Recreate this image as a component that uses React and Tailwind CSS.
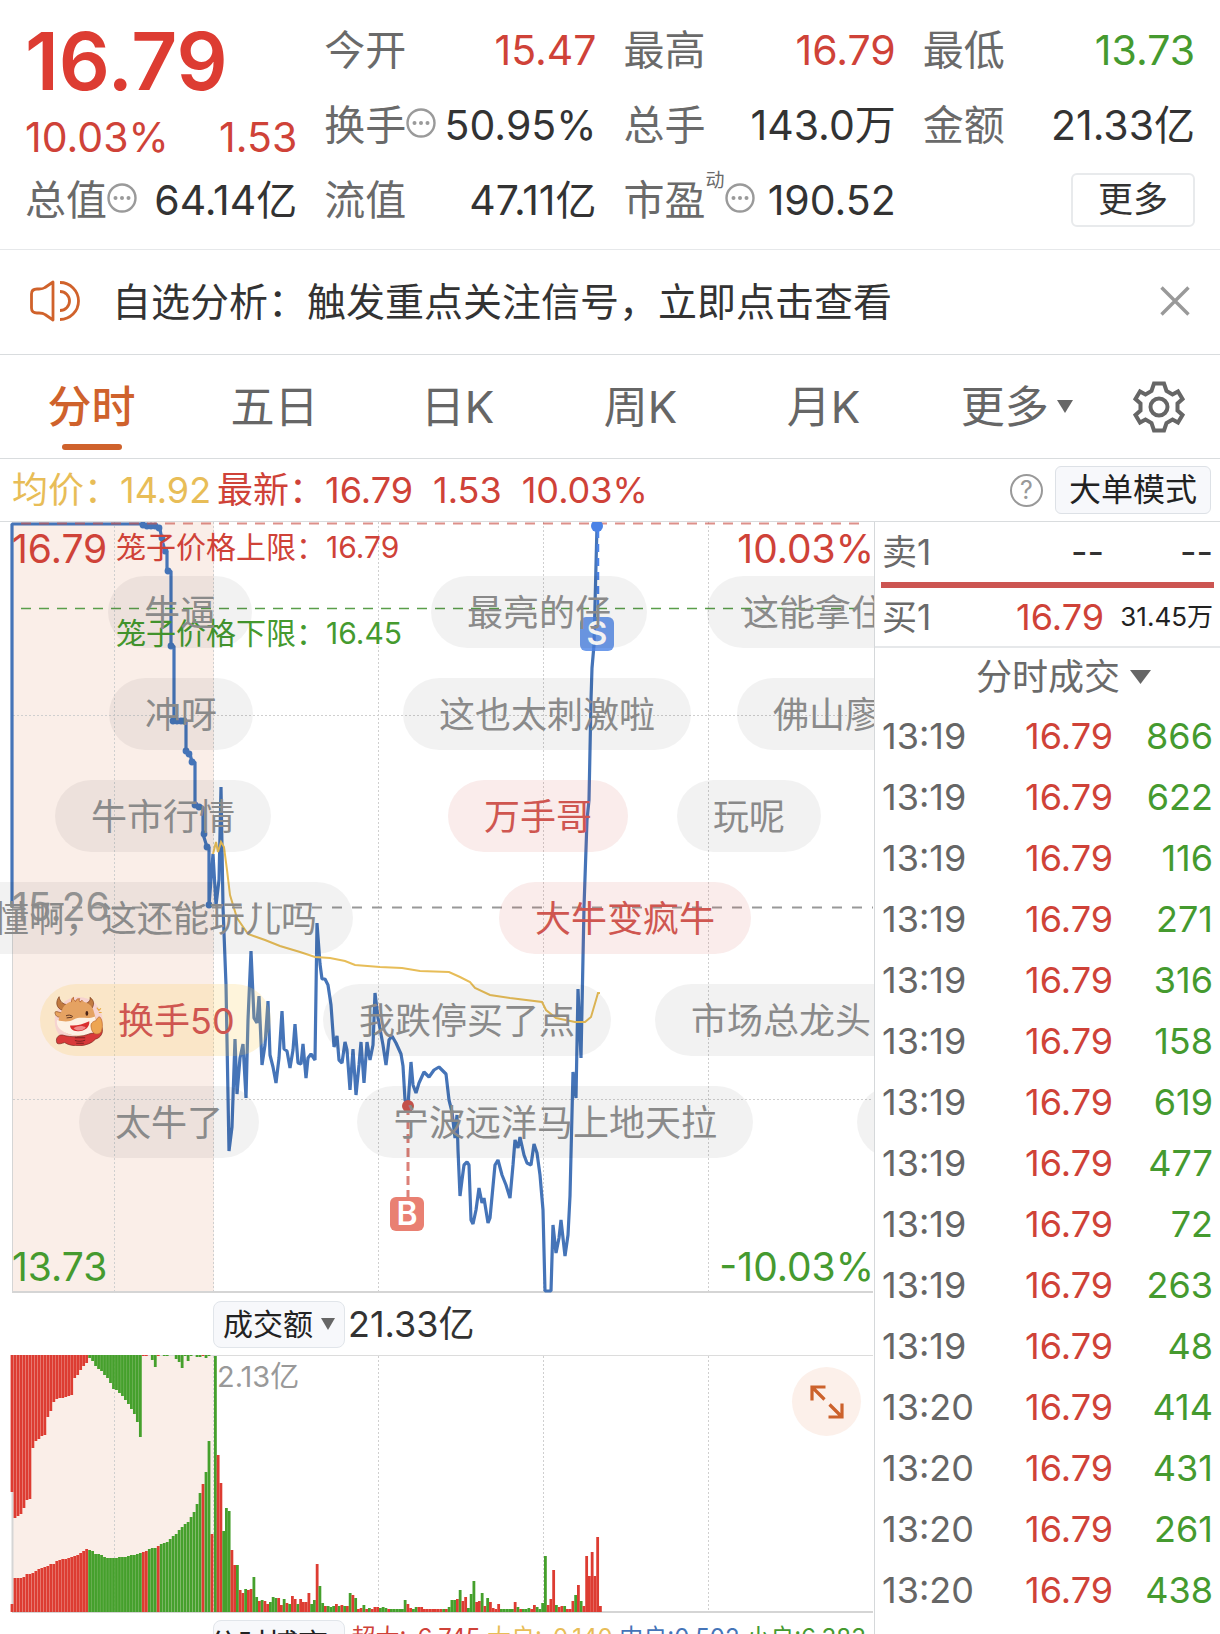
import React from "react";

const RED = "#dd3c32";
const GREEN = "#45a02c";

const priceLine =
  "12,907 12,524 143,524 150,526 157,526 160,529 162,540 165,551 167,551 167,571 171,571 171,646 174,646 174,721 186,721 186,751 190,754 192,762 195,762 195,806 203,807 203,834 207,847 209,847 209,905 213,854 216,905 219,880 221,787 223,907 226,985 229,1151 232,1127 235,1039 237,1094 240,1058 243,1044 246,1098 248,1020 251,951 254,1018 257,1023 259,996 262,1065 265,1045 268,1001 270,1055 273,1067 276,1083 279,1058 282,1011 284,1049 287,1051 290,1068 293,1050 295,1024 298,1063 301,1064 303,1044 306,1078 308,1058 311,1054 315,1060 317,923 320,964 322,979 325,979 328,985 331,1005 334,1047 337,1036 339,1060 342,1063 345,1042 347,1050 350,1090 353,1049 356,1095 359,1065 361,1042 364,1083 367,1042 370,1060 373,1045 375,993 378,1018 383,1045 386,1065 389,1040 392,1036 396,1043 401,1054 403,1066 405,1100 408,1105 411,1062 413,1085 416,1093 419,1083 424,1072 429,1077 434,1070 439,1067 446,1074 449,1100 452,1112 455,1138 457,1115 458,1150 460,1196 462,1180 464,1165 467,1162 469,1165 471,1220 473,1224 476,1210 479,1188 482,1203 484,1198 488,1223 490,1218 495,1165 498,1160 502,1175 506,1185 510,1198 513,1165 515,1140 518,1148 520,1137 524,1155 527,1163 531,1165 534,1144 537,1153 540,1175 543,1210 545,1291 551,1291 553,1225 556,1253 559,1238 561,1220 565,1256 568,1235 570,1196 573,1072 576,1098 578,989 581,1058 584,907 587,820 589,800 591,700 592,668 594,645 597,525";

const averageLine =
  "213,854 216,842 218,852 221,842 224,847 227,870 230,895 237,918 248,934 265,940 280,946 300,952 315,957 330,958 345,961 355,965 380,967 402,968 420,971 449,972 460,977 470,982 475,988 490,995 510,998 542,1002 546,1010 556,1018 575,1022 585,1022 591,1017 596,1000 598,993 600,993";

const auctionDots = [
  [143, 525], [147, 526], [151, 526], [155, 526], [159, 528], [162, 538], [165, 551], [168, 571],
  [171, 646], [173, 721], [177, 721], [181, 721], [184, 721], [186, 751], [189, 754], [192, 762],
  [195, 805], [199, 807], [204, 834], [207, 847], [209, 905],
];

// Call-auction bars: height from the base, height from the top, colours.
const auctionBase = [
  8, 34, 34, 34, 35, 38, 38, 39, 41, 43, 44, 45, 46, 48, 48, 51, 52, 53, 53, 54, 55, 56, 57, 59, 61, 63,
  62, 61, 58, 58, 57, 55, 54, 54, 54, 54, 55, 55, 55, 56, 57, 57, 58, 59, 60, 61, 63, 64, 64, 66, 68, 69,
  70, 73, 76, 78, 82, 85, 88, 90, 95, 100, 108, 119, 128, 140, 171, 78,
];
const auctionTop = [
  137, 163, 161, 159, 153, 145, 144, 93, 86, 84, 81, 80, 62, 56, 47, 44, 43, 43, 42, 41, 40, 23, 20, 15, 11, 8,
  3, 6, 11, 14, 16, 20, 23, 28, 34, 35, 38, 41, 45, 49, 54, 59, 67, 82, 1, 1, 0, 5, 12, 1, 0, 1,
  1, 0, 0, 4, 7, 13, 1, 6, 1, 0, 2, 2, 1, 3, 1, 0,
];
const auctionRed = (i) => i < 26 || [44, 45, 49, 64, 67].includes(i);

// Continuous trading, one entry a minute: colour letter and height.
const minutes =
  "g256 r157 r129 g81 g104 g101 r62 r47 g47 r22 r19 g23 r22 r23 g35 g15 r11 g12 r11 r8 g10 g15 g14 r14 r7 g13 r9 g8 r16 r13 g8 r13 r10 r10 r19 g8 g12 r48 g26 g9 r6 g6 g5 g6 r8 g6 r7 g6 r6 g19 r17 g14 r3 r4 g7 r3 g4 r3 r5 r5 g4 g5 g4 r3 g3 g3 g3 g3 g3 g12 r8 r4 g3 g5 r5 r5 r3 r3 r3 r3 r3 r3 r3 g3 r3 g5 g12 g12 r13 g22 r11 r15 g4 g18 g31 r10 r11 g19 r6 g14 r10 r4 r3 r8 g3 g3 g3 g3 g3 r10 g5 r3 g3 g3 g4 r3 r7 g5 g3 g9 g56 r7 r13 r42 g7 r5 r6 g6 r3 r3 r11 g17 r27 g11 r6 r56 r36 r60 r36 r75 r6".split(" ");

const trades = [
  ["13:19", 866], ["13:19", 622], ["13:19", 116], ["13:19", 271], ["13:19", 316],
  ["13:19", 158], ["13:19", 619], ["13:19", 477], ["13:19", 72], ["13:19", 263],
  ["13:19", 48], ["13:20", 414], ["13:20", 431], ["13:20", 261], ["13:20", 438],
];

const comments = [
  ["牛逼", "left-[108px] top-[54px]"],
  ["最亮的仔", "left-[431px] top-[54px]"],
  ["这能拿住", "left-[707px] top-[54px]"],
  ["冲呀", "left-[109px] top-[156px]"],
  ["这也太刺激啦", "left-[403px] top-[156px]"],
  ["佛山廖", "left-[737px] top-[156px]"],
  ["牛市行情", "left-[55px] top-[258px]"],
  ["万手哥", "left-[448px] top-[258px]", "hot"],
  ["玩呢", "left-[677px] top-[258px]"],
  ["懂啊，这还能玩儿吗", "left-[-43px] top-[360px]"],
  ["大牛变疯牛", "left-[499px] top-[360px]", "hot"],
  ["换手50", "left-[40px] top-[462px]", "gold"],
  ["我跌停买了点", "left-[323px] top-[462px]"],
  ["市场总龙头", "left-[655px] top-[462px]"],
  ["太牛了", "left-[79px] top-[564px]"],
  ["宁波远洋马上地天拉", "left-[357px] top-[564px]"],
  ["", "left-[857px] top-[564px]"],
];

const tones = {
  plain: "bg-black/5 px-9 text-[#8a8a8a]",
  hot: "bg-[#d0403a]/10 px-9 text-[#cf5650]",
  gold: "bg-[#f8c94c]/20 gap-3.5 pl-3.5 pr-9 text-[#cf5650]",
};

function MoreDots({ label }) {
  return (
    <button aria-label={label} className="mb-1.5 shrink-0">
      <svg width="30" height="30" viewBox="0 0 30 30" fill="none">
        <circle cx="15" cy="15" r="13.5" stroke="#9a9a9a" strokeWidth="2.4" />
        <g fill="#9a9a9a">
          <circle cx="8.5" cy="15" r="2" />
          <circle cx="15" cy="15" r="2" />
          <circle cx="21.5" cy="15" r="2" />
        </g>
      </svg>
    </button>
  );
}

function Triangle({ w, h }) {
  return (
    <svg width={w} height={h} viewBox="0 0 20 14" preserveAspectRatio="none" className="shrink-0" aria-hidden="true">
      <path d="M0 0H20L10 14Z" fill="#666" />
    </svg>
  );
}

function Stat({ label, value, tone = "text-[#333]", sup, more }) {
  return (
    <div className="flex h-[75px] items-center">
      <dt className="flex items-center whitespace-nowrap text-[#6a6a6a]">
        {label}
        {sup && <sup className="-top-5 text-[19px] leading-none">{sup}</sup>}
        {more && <MoreDots label={label + "说明"} />}
      </dt>
      <dd className={"ml-auto whitespace-nowrap " + tone}>{value}</dd>
    </div>
  );
}

function Bull() {
  return (
    <svg width="50" height="50" viewBox="0 0 144 146" fill="none" aria-hidden="true" className="shrink-0">
      <circle cx="71" cy="73" r="70" fill="#f6d3d0" />
      <path d="M14 2C2 18 6 36 24 42L40 26C24 24 16 16 14 2Z" fill="#c17a40" stroke="#7a3a1c" strokeWidth="2" />
      <path d="M104 4C118 14 116 26 110 36L92 22C102 18 106 12 104 4Z" fill="#c17a40" stroke="#7a3a1c" strokeWidth="2" />
      <path d="M22 50C4 44 2 44 2 50C4 60 12 64 22 60Z" fill="#e8a35d" stroke="#8a4a22" strokeWidth="2" />
      <path d="M22 42C30 20 50 14 66 15C92 14 112 26 116 48C124 72 122 98 100 110C76 122 36 116 16 94C8 78 14 56 22 42Z" fill="#e5a262" />
      <path d="M8 70C28 76 44 76 58 68C76 58 98 70 118 60C126 84 118 104 98 112C70 120 36 114 16 96C8 88 6 78 8 70Z" fill="#fdf1e4" />
      <path d="M8 138C2 126 10 112 24 114C50 122 80 120 104 110C124 108 136 100 139 92C144 106 136 122 120 126C100 150 50 150 30 136C22 138 14 142 8 138Z" fill="#d8393a" stroke="#7a2c20" strokeWidth="2" />
      <path d="M50 18C50 8 54 4 56 4C54 12 60 14 62 16C64 8 70 8 74 8C70 12 74 16 76 18C78 12 82 12 84 16" stroke="#b5622e" strokeWidth="2.5" fill="#e5a262" />
      <path d="M34 58C42 54 48 56 54 60M36 64L52 62" stroke="#4a2418" strokeWidth="2.5" />
      <ellipse cx="95" cy="51" rx="4" ry="7" fill="#4a2418" />
      <path d="M46 86C62 88 82 84 102 74C104 92 88 104 68 103C54 102 46 96 46 86Z" fill="#d92f2f" />
      <path d="M56 94C68 86 84 86 92 92C84 102 66 105 56 94Z" fill="#f08a8a" />
      <path d="M108 94C104 80 112 74 122 72C126 60 134 58 136 66C142 76 142 100 134 108C122 116 110 108 108 94Z" fill="#eda552" stroke="#b9662c" strokeWidth="2" />
      <path d="M124 34L130 42L136 36M130 48L138 48" stroke="#e7a93c" strokeWidth="3" />
      <path d="M60 122H90M60 130C70 133 80 133 90 129M64 138H86" stroke="#6d1c1c" strokeWidth="2.5" />
    </svg>
  );
}

function Quote() {
  return (
    <header className="grid grid-cols-4 gap-x-[27px] border-b border-[#e6e8ea] px-[25px] pb-[11px] pt-[13px] text-[41px] leading-none">
      <div>
        <div className="flex h-24 items-center text-[80px] font-semibold text-[#dd3c32]">16.79</div>
        <div className="flex h-14 items-center justify-between text-[#cf4238]">
          <span>10.03%</span>
          <span>1.53</span>
        </div>
        <dl className="-mt-0.5">
          <Stat label="总值" more value="64.14亿" />
        </dl>
      </div>
      <dl>
        <Stat label="今开" value="15.47" tone="text-[#cf4238]" />
        <Stat label="换手" more value="50.95%" />
        <Stat label="流值" value="47.11亿" />
      </dl>
      <dl>
        <Stat label="最高" value="16.79" tone="text-[#cf4238]" />
        <Stat label="总手" value="143.0万" />
        <Stat label="市盈" sup="动" more value="190.52" />
      </dl>
      <div>
        <dl>
          <Stat label="最低" value="13.73" tone="text-[#459a2f]" />
          <Stat label="金额" value="21.33亿" />
        </dl>
        <div className="flex h-[73px] items-center justify-end">
          <button className="h-[54px] w-[124px] rounded-md border-2 border-[#e8eaec] text-[35px] leading-none text-[#333]">更多</button>
        </div>
      </div>
    </header>
  );
}

function Notice() {
  return (
    <div className="flex h-[105px] items-center border-b border-[#d9dcde] pb-0.5 pl-[29px] pr-[30px]">
      <svg width="51" height="42" viewBox="0 0 51 42" fill="none" stroke="#d0622b" strokeWidth="2.8" aria-hidden="true" className="shrink-0">
        <path d="M24 2V40L16 34.500C14 33 13 33 10 33H8Q2.500 33 2.500 28V14Q2.500 9 8 9H10C13 9 14 9 16 7.500Z" strokeLinejoin="round" />
        <path d="M31 2.500A18.500 18.500 0 0 1 31 39.500M31 11.500A9.500 9.500 0 0 1 31 30.500" />
      </svg>
      <a href="#analysis" className="ml-8 whitespace-nowrap text-[39px] leading-none text-[#333]">自选分析：触发重点关注信号，立即点击查看</a>
      <button aria-label="关闭" className="ml-auto">
        <svg width="30" height="30" viewBox="0 0 30 30" fill="none" stroke="#999" strokeWidth="3.4">
          <path d="M1.500 1.500L28.500 28.500M28.500 1.500L1.500 28.500" />
        </svg>
      </button>
    </div>
  );
}

function Tabs() {
  return (
    <nav className="flex h-[104px] items-stretch border-b border-[#d9dcde] text-[44px] leading-none text-[#666]">
      {["分时", "五日", "日K", "周K", "月K"].map((t, i) => (
        <button key={t} className={"relative w-[15%] " + (i === 0 ? "font-medium text-[#cf622c]" : "")}>
          {t}
          {i === 0 && <span className="absolute bottom-2 left-1/2 h-1.5 w-[60px] -translate-x-1/2 rounded-full bg-[#cf622c]" />}
        </button>
      ))}
      <button className="flex w-[17%] items-center justify-center gap-2 pr-1">
        更多
        <Triangle w={16} h={13} />
      </button>
      <button aria-label="设置" className="flex flex-1 items-center justify-center pr-6">
        <svg width="52" height="54" viewBox="-26 -27 52 54" fill="none" stroke="#666" strokeWidth="4" strokeLinejoin="miter">
          <path d="M-5 -23.500H5L7.500 -16L13.500 -12.500L19 -15.500L23.500 -8L18.500 -3.500V3.500L23.500 8L19 15.500L13.500 12.500L7.500 16L5 23.500H-5L-7.500 16L-13.500 12.500L-19 15.500L-23.500 8L-18.500 3.500V-3.500L-23.500 -8L-19 -15.500L-13.500 -12.500L-7.500 -16Z" />
          <circle r="8.500" />
        </svg>
      </button>
    </nav>
  );
}

function InfoRow() {
  return (
    <div className="flex h-[63px] items-center whitespace-nowrap border-b border-[#d9dcde] pl-3 pr-[9px] text-[36px] leading-none text-[#cf4238]">
      <span className="text-[#e8bd57]">均价：14.92</span>
      <span className="ml-1.5">最新：16.79</span>
      <span className="ml-5">1.53</span>
      <span className="ml-5">10.03%</span>
      <button aria-label="帮助" className="ml-auto mr-3 flex size-[33px] items-center justify-center rounded-full border-2 border-[#999] text-[25px] leading-none text-[#999]">?</button>
      <button className="h-12 w-[156px] rounded-md border border-[#dde1e6] bg-[#f7f8fb] text-[32px] leading-none text-[#222]">大单模式</button>
    </div>
  );
}

function PriceChart() {
  return (
    <section className="relative h-[771px] overflow-hidden" aria-label="分时走势">
      <svg viewBox="0 522 874 771" preserveAspectRatio="none" className="block size-full" fill="none">
        <rect x="12" y="522" width="202" height="769" fill="#faeee8" />
        <g stroke="#cfcfcf" strokeDasharray="2 2">
          <path d="M114.500 522V1291M213.500 522V1291M378.500 522V1291M543.500 522V1291M708.500 522V1291M13 715.500H873M13 1099.500H873" />
        </g>
        <path d="M12.500 907V1292" stroke="#d5d5d5" />
        <path d="M12 1292H873" stroke="#d5d5d5" strokeWidth="2" />
        <polyline points={priceLine} stroke="#4574b8" strokeWidth="3.2" strokeLinejoin="bevel" />
        <polyline points={averageLine} stroke="#e7bd58" strokeWidth="2" />
        <g fill="#4574b8">
          {auctionDots.map(([x, y]) => <circle key={x + "-" + y} cx={x} cy={y} r="3.4" />)}
        </g>
        <path d="M21 523.500H860" stroke="#c9544c" strokeOpacity="0.650" strokeWidth="2" strokeDasharray="10 8" />
        <path d="M21 608.500H860" stroke="#5a9e4a" strokeWidth="1.500" strokeDasharray="10 8" />
        <path d="M12 907.500H873" stroke="#999" strokeWidth="2" strokeDasharray="10 10" />
        <path d="M598 530V617" stroke="#4b83e6" strokeWidth="2.500" strokeDasharray="8 6" />
        <circle cx="597" cy="526" r="6" fill="#4b83e6" />
        <path d="M408 1106V1197" stroke="#dc8078" strokeWidth="3" strokeDasharray="9 5" />
        <circle cx="408" cy="1106" r="6" fill="#cf5650" />
      </svg>

      <span className="absolute left-[12px] top-[9px] text-[39px] leading-9 text-[#cf4238]">16.79</span>
      <span className="absolute right-0 top-[9px] text-[39px] leading-9 text-[#cf4238]">10.03%</span>
      <span className="absolute left-[12px] top-[367px] text-[39px] leading-9 text-[#999]">15.26</span>
      <span className="absolute bottom-2 left-[12px] text-[39px] leading-9 text-[#459a2f]">13.73</span>
      <span className="absolute bottom-2 right-0 text-[39px] leading-9 text-[#459a2f]">-10.03%</span>
      <span className="absolute left-[116px] top-[7px] text-[30px] leading-9 text-[#cf4238]">笼子价格上限：16.79</span>
      <span className="absolute left-[116px] top-[93px] text-[30px] leading-9 text-[#459a2f]">笼子价格下限：16.45</span>

      <span className="absolute left-[580px] top-[95px] flex size-[34px] items-center justify-center rounded-md bg-[#4b83e6]/80 text-[32px] font-semibold leading-none text-white">S</span>
      <span className="absolute left-[390px] top-[675px] flex size-[34px] items-center justify-center rounded-md bg-[#e98072] text-[32px] font-semibold leading-none text-white">B</span>

      <ul>
        {comments.map(([text, place, tone = "plain"]) => (
          <li key={place} className={"absolute flex h-[72px] items-center whitespace-nowrap rounded-full pt-0.5 text-[36px] leading-none " + place + " " + tones[tone]}>
            {tone === "gold" && <Bull />}
            {text}
          </li>
        ))}
      </ul>
    </section>
  );
}

function Dropdown({ children }) {
  return (
    <button className="flex h-[47px] w-[132px] shrink-0 items-center justify-center gap-2 whitespace-nowrap rounded-lg border border-[#e1e5ea] bg-[#f7f8fb] text-[30px] leading-none text-[#222]">
      {children}
      <Triangle w={14} h={12} />
    </button>
  );
}

function VolumeChart() {
  return (
    <section className="relative h-[258px]" aria-label="成交额">
      <svg viewBox="0 0 874 258" preserveAspectRatio="none" className="block size-full" fill="none">
        <rect x="12" y="0" width="202" height="257" fill="#faeee8" />
        <path d="M114.500 1V257M213.500 1V257M378.500 1V257M543.500 1V257M708.500 1V257" stroke="#cfcfcf" strokeDasharray="2 2" />
        <path d="M12 0.500H873" stroke="#dcdcdc" />
        <path d="M12.500 0V257M12 257H873" stroke="#d5d5d5" strokeWidth="2" />
        {auctionBase.map((h, i) => (
          <g key={i} fill={auctionRed(i) ? RED : GREEN}>
            <rect x={10.6 + i * 2.985} y={257 - h} width="2.8" height={h} />
            <rect x={10.6 + i * 2.985} y="0" width="2.8" height={auctionTop[i]} />
          </g>
        ))}
        {minutes.map((m, j) => {
          const h = Number(m.slice(1));
          return <rect key={j} x={214 + j * 2.75} y={257 - h} width="2.8" height={h} fill={m[0] === "r" ? RED : GREEN} />;
        })}
      </svg>
      <span className="absolute left-[217px] top-1.5 text-[29px] leading-8 text-[#999]">2.13亿</span>
      <button aria-label="全屏" className="absolute right-[13px] top-3 flex size-[69px] items-center justify-center rounded-full bg-[#fcf0ea]">
        <svg width="34" height="34" viewBox="0 0 34 34" fill="none" stroke="#cc622c" strokeWidth="3.2">
          <path d="M2 15.500V2H15.500M2 2L14.500 14.500M32 18.500V32H18.500M32 32L19.500 19.500" />
        </svg>
      </button>
    </section>
  );
}

function OrderPanel() {
  return (
    <aside className="w-[346px] shrink-0 border-l border-[#d5d8da] text-[36px] leading-none">
      <div className="flex h-[60px] items-center px-[7px]">
        <span className="flex-1 text-[35px] text-[#6a6a6a]">卖1</span>
        <span className="text-[#333]">--</span>
        <span className="w-[109px] text-right text-[#333]">--</span>
      </div>
      <div className="mx-1.5 h-1.5 bg-[#cc5552]" />
      <div className="flex h-[60px] items-center border-b-2 border-[#e6e8ea] px-[7px]">
        <span className="flex-1 text-[35px] text-[#6a6a6a]">买1</span>
        <span className="text-[#cf4238]">16.79</span>
        <span className="w-[109px] whitespace-nowrap text-right text-[26px] text-[#222]">31.45万</span>
      </div>
      <button className="flex h-[57px] w-full items-center justify-center gap-2.5 pl-8 text-[36px] text-[#6a6a6a]">
        分时成交
        <Triangle w={21} h={14} />
      </button>
      <table className="w-full table-fixed">
        <tbody>
          {trades.map(([time, volume], i) => (
            <tr key={i} className="h-[61px]">
              <td className="w-[130px] p-0 pl-[7px] text-[#666]">{time}</td>
              <td className="w-[108px] p-0 text-right text-[#cf4238]">16.79</td>
              <td className="p-0 pr-[7px] text-right text-[#459a2f]">{volume}</td>
            </tr>
          ))}
        </tbody>
      </table>
    </aside>
  );
}

export default function App() {
  return (
    <div className="flex h-screen flex-col overflow-hidden bg-white font-['Inter','Noto_Sans_CJK_SC',sans-serif]">
      <Quote />
      <Notice />
      <Tabs />
      <InfoRow />
      <main className="flex min-h-0 flex-1">
        <div className="min-w-0 flex-1">
          <PriceChart />
          <div className="flex h-[62px] items-center gap-[3px] pl-[213px] text-[36px] leading-none text-[#333]">
            <Dropdown>成交额</Dropdown>
            <span>21.33亿</span>
          </div>
          <VolumeChart />
          <div className="flex items-start justify-between whitespace-nowrap pl-[213px] pr-2 pt-[7px] text-[24px] leading-none">
            <Dropdown>分时博弈</Dropdown>
            <span className="mt-1.5 text-[#cf4238]">超大:-6.745</span>
            <span className="mt-1.5 text-[#e8bd57]">大户:-0.140</span>
            <span className="mt-1.5 text-[#4574b8]">中户:0.502</span>
            <span className="mt-1.5 text-[#459a2f]">小户:6.383</span>
          </div>
        </div>
        <OrderPanel />
      </main>
    </div>
  );
}
